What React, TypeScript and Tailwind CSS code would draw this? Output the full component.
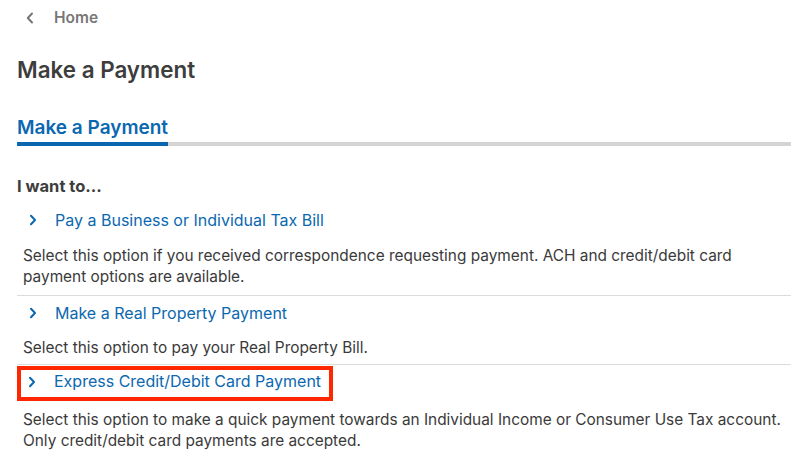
const options = [
  {
    title: "Pay a Business or Individual Tax Bill",
    text: "Select this option if you received correspondence requesting payment. ACH and credit/debit card payment options are available.",
    descClass: "pt-[8px] pb-[8px]",
  },
  {
    title: "Make a Real Property Payment",
    text: "Select this option to pay your Real Property Bill.",
    descClass: "pt-[7px] pb-[6px]",
  },
  {
    title: "Express Credit/Debit Card Payment",
    text: "Select this option to make a quick payment towards an Individual Income or Consumer Use Tax account. Only credit/debit card payments are accepted.",
    descClass: "pt-[8px] pb-[8px]",
    highlight: true,
  },
];

function Chevron({ dir }: { dir: "left" | "right" }) {
  return (
    <svg width="8" height="12" viewBox="0 0 8 12" fill="none" className="shrink-0">
      <path
        d={dir === "left" ? "M6 1.5 1.8 6 6 10.5" : "M2 1.8 6 6 2 10.2"}
        stroke="currentColor"
        strokeWidth="2"
        strokeLinecap="round"
        strokeLinejoin="round"
      />
    </svg>
  );
}

export default function App() {
  return (
    <div className="min-h-screen bg-white font-['Inter','Noto_Sans',sans-serif] pl-[17px] pr-[18px]">
      <div className="flex items-center h-[35px] pt-px">
        <span className="text-[#777] ml-[9px]">
          <Chevron dir="left" />
        </span>
        <span className="ml-[20px] text-[15.5px] font-semibold text-[#777]">Home</span>
      </div>

      <h1 className="mt-[20px] text-[22.4px] leading-[30px] font-semibold text-[#3d3d3d]">
        Make a Payment
      </h1>

      <div className="mt-[30px]">
        <div className="text-[19px] leading-[26px] font-semibold text-[#0b68b0]">Make a Payment</div>
        <div className="mt-px flex h-[4px]">
          <div className="w-[151px] bg-[#0b68b0]" />
          <div className="flex-1 bg-[#d4d4d4]" />
        </div>
      </div>

      <div className="mt-[29px] text-[16.5px] leading-[22px] font-bold text-[#3d3d3d]">I want to...</div>

      <div className="mt-[6px]">
        {options.map((o, i) => (
          <div key={o.title} className={i > 0 ? "border-t border-[#dcdcdc]" : ""}>
            {o.highlight ? (
              <div className="flex items-start w-[316px] mt-px pl-[7px] pt-px pb-[5px] border-[4px] border-[#ff2600] text-[#0b68b0]">
                <span className="flex items-center h-[21px]">
                  <Chevron dir="right" />
                </span>
                <span className="ml-[18px] text-[16px] leading-[21px]">{o.title}</span>
              </div>
            ) : (
              <div className="flex items-center h-[34px] pl-[12px] text-[#0b68b0]">
                <Chevron dir="right" />
                <span className="ml-[18px] text-[16px] leading-[21px]">{o.title}</span>
              </div>
            )}
            <p className={`pl-[6px] text-[15.4px] leading-[21px] text-[#3a3a3a] ${o.descClass}`}>{o.text}</p>
          </div>
        ))}
      </div>
    </div>
  );
}
